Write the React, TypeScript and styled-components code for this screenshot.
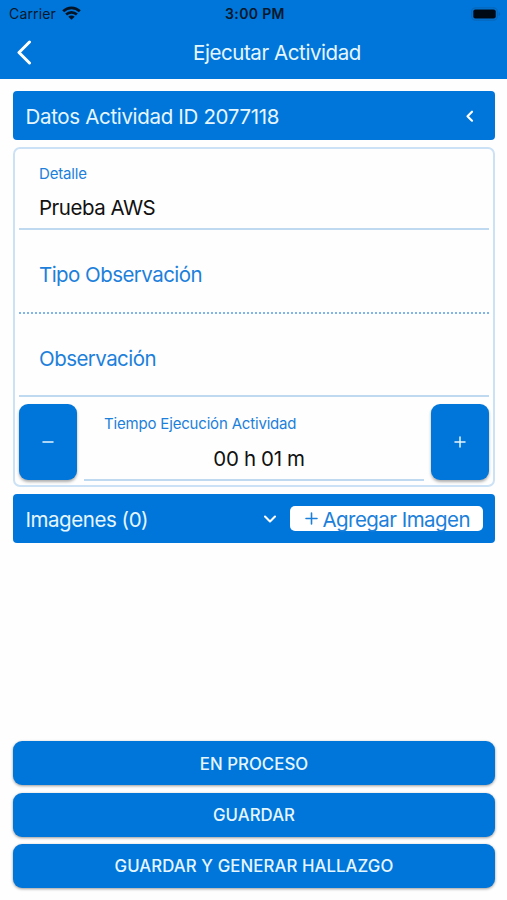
import React from "react";
import styled, { createGlobalStyle } from "styled-components";

const BLUE = "#0076da";
const LABEL_BLUE = "#1c80db";
const PALE = "#e6f6ff";

const GlobalStyle = createGlobalStyle`
  * { box-sizing: border-box; }
  body {
    margin: 0;
    background: #fefefe;
    font-family: Inter, "Liberation Sans", sans-serif;
  }
  button { font-family: inherit; border: 0; padding: 0; margin: 0; cursor: pointer; }
`;

const Screen = styled.main`
  height: 900px;
  display: flex;
  flex-direction: column;
  overflow: hidden;
`;

const Header = styled.header`
  height: 79px;
  flex: none;
  background: ${BLUE};
`;

const StatusBar = styled.div`
  height: 27px;
  display: grid;
  grid-template-columns: 1fr auto 1fr;
  align-items: center;
  padding: 0 6px 0 9px;
  color: #06182c;
`;

const Carrier = styled.div`
  display: flex;
  align-items: center;
  gap: 6px;
`;

const BatterySlot = styled.div`
  display: flex;
  justify-content: flex-end;
`;

const NavBar = styled.div`
  height: 51px;
  display: grid;
  grid-template-columns: 47px 1fr 0;
  align-items: center;
  justify-items: center;
`;

const BackButton = styled.button`
  background: none;
  display: flex;
`;

const Label = styled.span<{ $size: number; $spacing?: number; $weight?: number; $color?: string; $drop?: number }>`
  display: block;
  white-space: nowrap;
  line-height: 1.2;
  font-size: ${(p) => p.$size}px;
  letter-spacing: ${(p) => p.$spacing ?? 0}px;
  font-weight: ${(p) => p.$weight ?? 400};
  color: ${(p) => p.$color ?? "inherit"};
  padding-top: ${(p) => p.$drop ?? 0}px;
`;

const Content = styled.div`
  flex: 1;
  display: flex;
  flex-direction: column;
  padding: 12px 12px 12px 13px;
`;

const SectionBar = styled.section`
  height: 49px;
  flex: none;
  display: flex;
  align-items: center;
  background: ${BLUE};
  color: ${PALE};
  border-radius: 4px;
  padding: 0 12px 0 12.5px;
`;

const Spacer = styled.div`
  flex: 1;
`;

const Card = styled.section`
  height: 340px;
  flex: none;
  margin: 7px 0;
  border: 2px solid #cbe1f5;
  border-radius: 7px;
  padding: 0 4px;
`;

const Field = styled.div<{ $height: number; $line?: string }>`
  height: ${(p) => p.$height}px;
  padding: 9px 0 0 20px;
  display: flex;
  flex-direction: column;
  justify-content: center;
  gap: 13px;
  border-bottom: ${(p) => p.$line ?? "2px solid #bfd9f1"};
`;

const TimeRow = styled.div`
  display: flex;
  gap: 7px;
  margin-top: 7px;
`;

const StepButton = styled.button`
  width: 58px;
  height: 76px;
  border-radius: 9px;
  background: ${BLUE};
  display: flex;
  align-items: center;
  justify-content: center;
  box-shadow: 0 2px 3px rgba(0, 0, 0, 0.32);
`;

const TimeField = styled.div`
  flex: 1;
  height: 77px;
  padding: 11px 0 0 20px;
  border-bottom: 2px solid #bfd9f1;
`;

const TimeValue = styled.div`
  display: flex;
  justify-content: center;
  margin-top: 14px;
  padding-right: 10px;
`;

const AddButton = styled.button`
  width: 193px;
  height: 25px;
  margin-left: 13px;
  border-radius: 5px;
  background: #fff;
  color: ${LABEL_BLUE};
  display: flex;
  align-items: center;
  padding-left: 15px;
  gap: 4.5px;
`;

const Actions = styled.div`
  display: flex;
  flex-direction: column;
  gap: 7.5px;
`;

const ActionButton = styled.button`
  height: 44px;
  border-radius: 9px;
  background: ${BLUE};
  color: ${PALE};
  display: flex;
  align-items: center;
  justify-content: center;
  box-shadow: 0 1px 3px rgba(0, 0, 0, 0.4);
`;

const WifiIcon = () => (
  <svg width="19" height="14" viewBox="0 0 19 14" fill="none" stroke="#031426" strokeWidth="2.7">
    <path d="M1.2 5.3C5.9 0.6 13.1 0.6 17.8 5.3" />
    <path d="M4.1 8.600C7.200 5.700 11.800 5.700 14.900 8.600" />
    <path d="M6.300 10.700C8.100 9.200 10.900 9.200 12.700 10.700L9.500 13.800Z" fill="#031426" stroke="none" />
  </svg>
);

const BatteryIcon = () => (
  <svg width="30" height="14" viewBox="0 0 30 14">
    <rect x="0.7" y="0.8" width="25.6" height="12.4" rx="3.6" fill="none" stroke="#0768ba" strokeWidth="1.2" />
    <rect x="2.3" y="2.4" width="22.4" height="9.2" rx="2" fill="#000a14" />
    <path d="M27.600 5v4c1-.4 1.600-1.200 1.600-2s-.6-1.600-1.600-2Z" fill="#0768ba" />
  </svg>
);

type StrokeProps = { d: string; w: number; h: number; sw: number; color?: string };

const Stroke = ({ d, w, h, sw, color = "#fff" }: StrokeProps) => (
  <svg
    width={w}
    height={h}
    viewBox={`0 0 ${w} ${h}`}
    fill="none"
    stroke={color}
    strokeWidth={sw}
    strokeLinecap="round"
    strokeLinejoin="round"
  >
    <path d={d} />
  </svg>
);

export default function App() {
  return (
    <Screen>
      <GlobalStyle />
      <Header>
        <StatusBar>
          <Carrier>
            <Label $size={14} $spacing={0.15} $drop={1}>Carrier</Label>
            <WifiIcon />
          </Carrier>
          <Label $size={14} $weight={600} $spacing={0.35} $drop={1}>3:00 PM</Label>
          <BatterySlot><BatteryIcon /></BatterySlot>
        </StatusBar>
        <NavBar>
          <BackButton aria-label="Volver">
            <Stroke w={16} h={26} sw={3} d="M13.500 2L3 12.500L13.500 23" />
          </BackButton>
          <Label $size={20.5} $spacing={-0.42} $drop={2} $color={PALE}>Ejecutar Actividad</Label>
        </NavBar>
      </Header>
      <Content>
        <SectionBar>
          <Label $size={20.5} $spacing={-0.33} $drop={4}>Datos Actividad ID 2077118</Label>
          <Spacer />
          <Stroke w={24} h={14} sw={2.2} d="M13 2.700L8.500 7.200L13 11.700" />
        </SectionBar>
        <Card>
          <Field $height={81}>
            <Label $size={15} $spacing={-0.15} $color={LABEL_BLUE}>Detalle</Label>
            <Label $size={20.5} $spacing={-0.5} $color="#111">Prueba AWS</Label>
          </Field>
          <Field $height={84} $line="2px dotted #7fb5e8">
            <Label $size={20.5} $spacing={-0.55} $color={LABEL_BLUE}>Tipo Observación</Label>
          </Field>
          <Field $height={83}>
            <Label $size={20.5} $spacing={-0.55} $color={LABEL_BLUE}>Observación</Label>
          </Field>
          <TimeRow>
            <StepButton aria-label="Restar">
              <Stroke w={14} h={14} sw={1.5} color={PALE} d="M2 7H12" />
            </StepButton>
            <TimeField>
              <Label $size={15} $spacing={-0.18} $color={LABEL_BLUE}>Tiempo Ejecución Actividad</Label>
              <TimeValue>
                <Label $size={20.5} $spacing={-0.35} $color="#111">00 h 01 m</Label>
              </TimeValue>
            </TimeField>
            <StepButton aria-label="Sumar">
              <Stroke w={14} h={14} sw={1.5} color={PALE} d="M2 7H12M7 2V12" />
            </StepButton>
          </TimeRow>
        </Card>
        <SectionBar>
          <Label $size={20.5} $spacing={-0.45} $drop={3}>Imagenes (0)</Label>
          <Spacer />
          <Stroke w={14} h={10} sw={2.1} d="M2 2.500L7 7.500L12 2.500" />
          <AddButton>
            <Stroke w={13} h={13} sw={1.6} color={LABEL_BLUE} d="M1 6.500H12M6.500 1V12" />
            <Label $size={20.5} $spacing={-0.55} $drop={3}>Agregar Imagen</Label>
          </AddButton>
        </SectionBar>
        <Spacer />
        <Actions>
          <ActionButton><Label $size={16.8} $weight={500} $spacing={0.05} $drop={2}>EN PROCESO</Label></ActionButton>
          <ActionButton><Label $size={16.8} $weight={500} $spacing={0.05} $drop={1}>GUARDAR</Label></ActionButton>
          <ActionButton><Label $size={16.8} $weight={500} $spacing={0.08} $drop={1}>GUARDAR Y GENERAR HALLAZGO</Label></ActionButton>
        </Actions>
      </Content>
    </Screen>
  );
}
